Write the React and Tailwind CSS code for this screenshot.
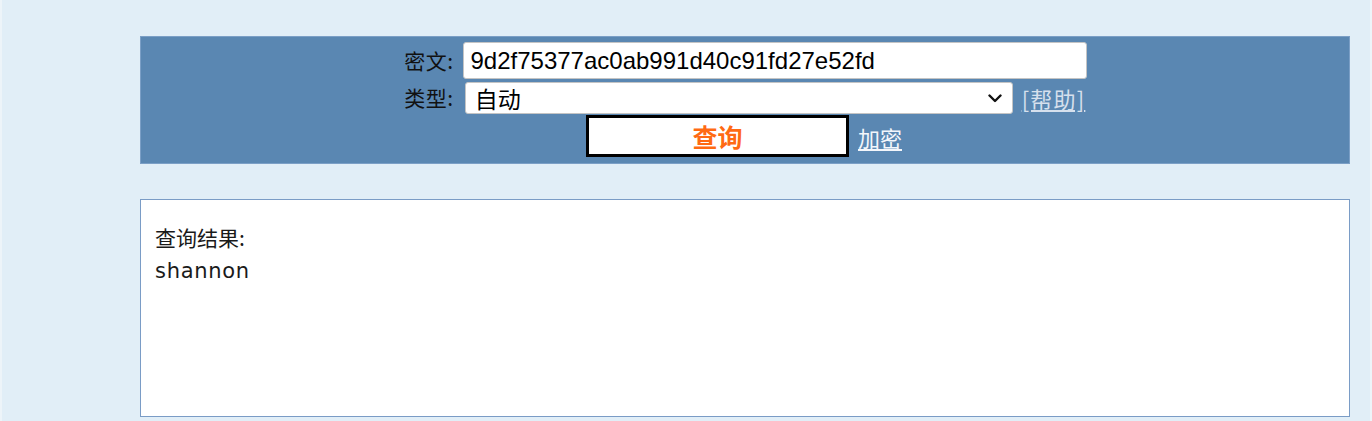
export default function App() {
  const cjk = { fontFamily: '"Noto Sans CJK SC", "Liberation Sans", sans-serif' };

  return (
    <div className="w-[1372px] h-[421px] bg-[#e1eef7] border-x-2 border-[#edf4f9] overflow-hidden" style={cjk}>
      <form
        className="ml-[138px] mt-[36px] w-[1210px] h-[128px] bg-[#5a87b2] border border-[#7b9fc6] flex flex-col items-center pt-[5px]"
        onSubmit={(e) => e.preventDefault()}
      >
        <div className="flex items-center h-[37px] mr-[4px]">
          <label className="text-[21px] text-[#111] w-[54px] text-right mr-[9px] tracking-[0.5px]">密文:</label>
          <input
            defaultValue="9d2f75377ac0ab991d40c91fd27e52fd"
            className="w-[624px] h-[37px] bg-white border border-[#c4c4c4] rounded-[3px] pl-[7px] text-[24px] text-black outline-none"
            style={{ fontFamily: '"Liberation Sans", Arial, sans-serif' }}
          />
        </div>
        <div className="flex items-center h-[32px] mt-[3px] mr-[5px]">
          <label className="text-[21px] text-[#111] w-[54px] text-right mr-[11px] tracking-[0.5px]">类型:</label>
          <div className="w-[548px] h-[32px] bg-white border border-[#c4c4c4] rounded-[3px] flex items-center justify-between pl-[9px] pr-[10px]">
            <span className="text-[23px] text-black leading-none">自动</span>
            <svg width="14" height="9" viewBox="0 0 14 9" fill="none">
              <path d="M1.5 1.5 L7 7 L12.5 1.5" stroke="#111" strokeWidth="2.4" strokeLinecap="round" strokeLinejoin="round" />
            </svg>
          </div>
          <a href="#" className="ml-[9px] text-[22px] text-[#d6e0ed] underline underline-offset-2 tracking-[1.2px]">
            [帮助]
          </a>
        </div>
        <div className="flex items-center h-[42px] mt-[1px] mr-[2px]">
          <button
            type="submit"
            className="w-[263px] h-[42px] bg-white border-[3px] border-black text-[#ff6a13] text-[25px] font-bold leading-none"
          >
            查询
          </button>
          <a href="#" className="ml-[9px] mt-[2px] text-[22px] text-[#f3f6fb] underline underline-offset-2">
            加密
          </a>
        </div>
      </form>

      <div className="ml-[138px] mt-[35px] w-[1210px] h-[218px] bg-white border border-[#7a9cc6] pl-[14px] pt-[20px]">
        <div className="text-[21px] text-[#1a1a1a] leading-[34px]" style={{ fontFamily: '"DejaVu Sans", "Noto Sans CJK SC", sans-serif' }}>
          <div style={cjk} className="leading-[34px]">查询结果:</div>
          <div className="tracking-[0.7px]">shannon</div>
        </div>
      </div>
    </div>
  );
}
